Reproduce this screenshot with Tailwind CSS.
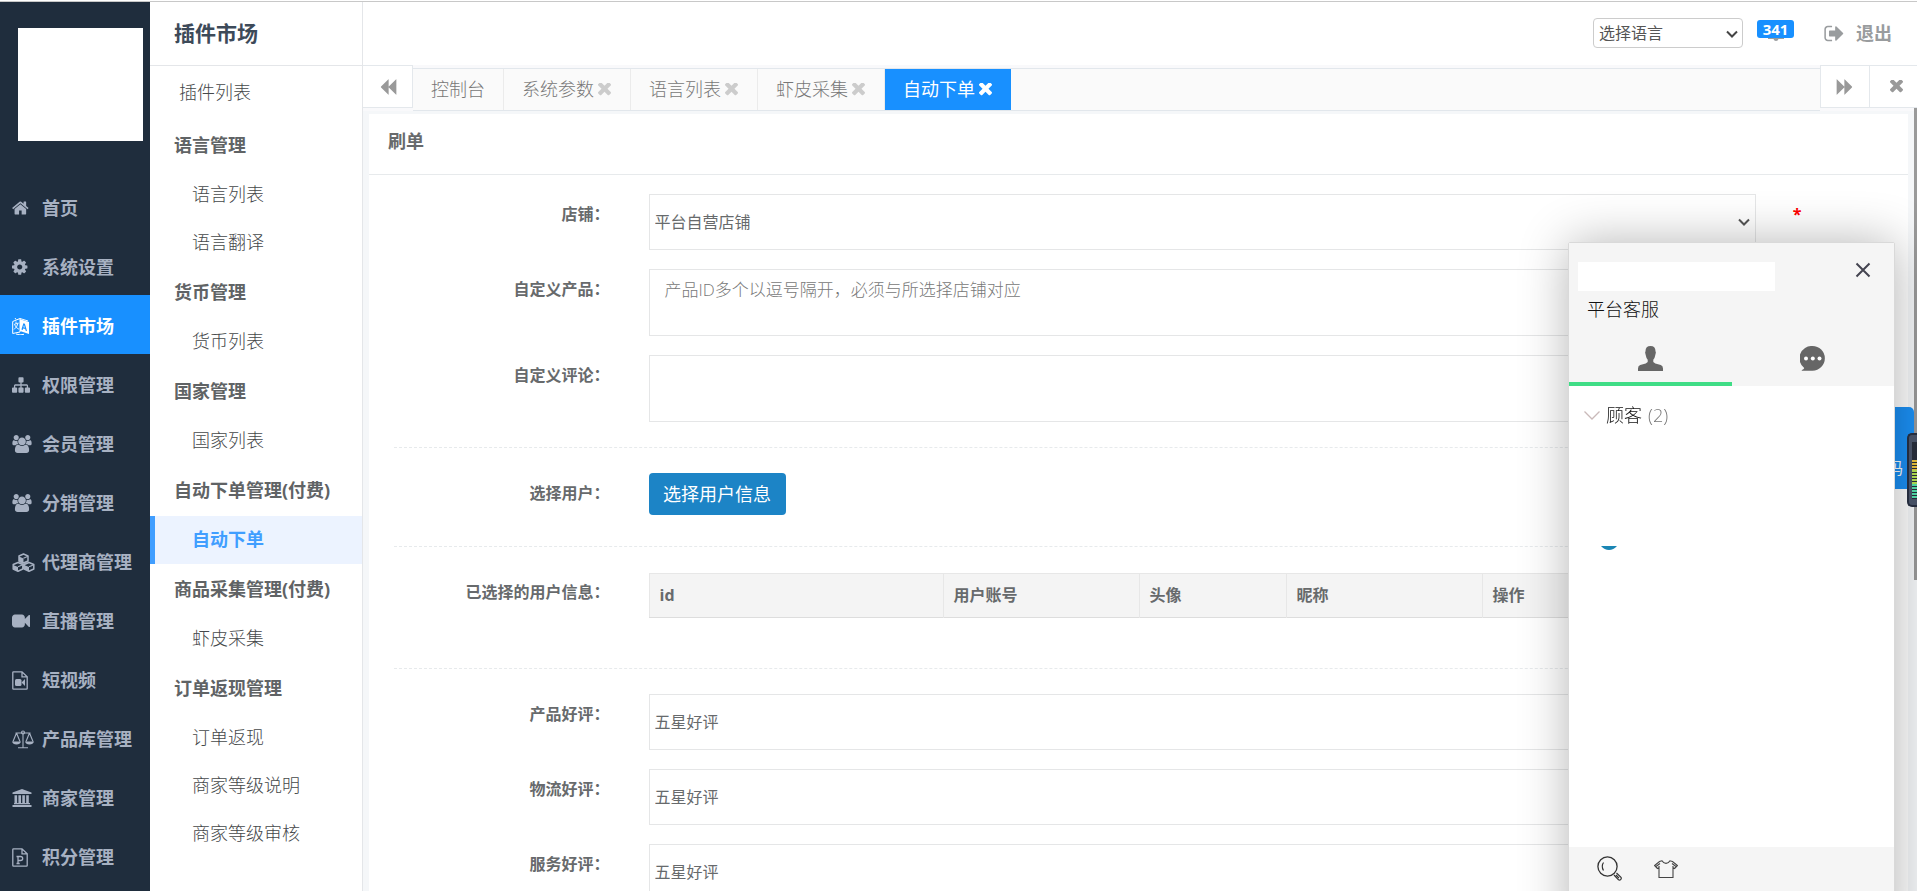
<!DOCTYPE html>
<html lang="zh-CN">
<head>
<meta charset="utf-8">
<title>插件市场 - 自动下单</title>
<script src="https://cdn.jsdelivr.net/npm/@tailwindcss/browser@4"></script>
</head>
<body class="h-screen overflow-hidden bg-white font-['Open_Sans','Noto_Sans_CJK_SC',sans-serif] text-[#676a6c]">
<svg class="hidden" aria-hidden="true">
  <symbol id="home" viewBox="64 0 1792 1792"><path d="M1472 992v480q0 26-19 45t-45 19h-384v-384h-256v384h-384q-26 0-45-19t-19-45v-480q0-1 .5-3t.5-3l575-474 575 474q1 2 1 6zm223-69l-62 74q-8 9-21 11h-3q-13 0-21-7l-692-577-692 577q-12 8-24 7-13-2-21-11l-62-74q-8-10-7-23.500t11-21.500l719-599q32-26 76-26t76 26l244 204v-195q0-14 9-23t23-9h192q14 0 23 9t9 23v408l219 182q10 8 11 21.500t-7 23.500z"/></symbol>
  <symbol id="cog" viewBox="128 0 1792 1792"><path d="M1152 896q0-106-75-181t-181-75-181 75-75 181 75 181 181 75 181-75 75-181zm512-109v222q0 12-8 23t-20 13l-185 28q-19 54-39 91 35 50 107 138 10 12 10 25t-9 23q-27 37-99 108t-94 71q-12 0-26-9l-138-108q-44 23-91 38-16 136-29 186-7 28-36 28h-222q-14 0-24.500-8.500t-11.500-21.500l-28-184q-49-16-90-37l-141 107q-10 9-25 9-14 0-25-11-126-114-165-168-7-10-7-23 0-12 8-23 15-21 51-66.500t54-70.500q-27-50-41-99l-183-27q-13-2-21-12.500t-8-23.500v-222q0-12 8-23t19-13l186-28q14-46 39-92-40-57-107-138-10-12-10-24 0-10 9-23 26-36 98.500-107.500t94.500-71.500q13 0 26 10l138 107q44-23 91-38 16-136 29-186 7-28 36-28h222q14 0 24.500 8.500t11.500 21.500l28 184q49 16 90 37l142-107q9-9 24-9 13 0 25 10 129 119 165 170 7 8 7 22 0 12-8 23-15 21-51 66.500t-54 70.500q26 50 41 98l183 28q13 2 21 12.500t8 23.500z"/></symbol>
  <symbol id="lang" viewBox="0 0 18 18"><path d="M.700 4.500l7.300-3v13.500L.7 16.500zM4 2.500l-1-1.500M8 1.500l8 2.500" fill="none" stroke="currentColor"/><path d="M2 7.500l4.500-1.500M4 4.500v2.300M6 6.300q-1 4-4 6.200M2.800 8q1.200 3 4.200 4.300" fill="none" stroke="currentColor" stroke-width=".9"/><path fill-rule="evenodd" d="M8 2.300L17 5v12L8 14zM11.400 6.200l-2 6.300 1.300.4.500-1.500 2 .600.500 1.800 1.400.400-2.200-7.500zM12 8l.8 2.700-1.400-.4z"/><path d="M4 17q4 1.600 8 .3" fill="none" stroke="currentColor"/></symbol>
  <symbol id="sitemap" viewBox="0 0 1792 1792"><path d="M1792 1248v320q0 40-28 68t-68 28h-320q-40 0-68-28t-28-68v-320q0-40 28-68t68-28h96v-192h-512v192h96q40 0 68 28t28 68v320q0 40-28 68t-68 28h-320q-40 0-68-28t-28-68v-320q0-40 28-68t68-28h96v-192h-512v192h96q40 0 68 28t28 68v320q0 40-28 68t-68 28h-320q-40 0-68-28t-28-68v-320q0-40 28-68t68-28h96v-192q0-52 38-90t90-38h512v-192h-96q-40 0-68-28t-28-68v-320q0-40 28-68t68-28h320q40 0 68 28t28 68v320q0 40-28 68t-68 28h-96v192h512q52 0 90 38t38 90v192h96q40 0 68 28t28 68z"/></symbol>
  <symbol id="users" viewBox="64 0 1920 1792"><path d="M657 896q-162 5-265 128h-134q-82 0-138-40.500t-56-118.500q0-353 124-353 6 0 43.500 21t97.500 42.500 119 21.500q67 0 133-23-5 37-5 66 0 139 81 256zm1071 637q0 120-73 189.500t-194 69.500h-874q-121 0-194-69.500t-73-189.500q0-53 3.500-103.500t14-109 26.500-108.500 43-97.500 62-81 85.500-53.500 111.500-20q10 0 43 21.500t73 48 107 48 135 21.500 135-21.500 107-48 73-48 43-21.500q61 0 111.500 20t85.500 53.500 62 81 43 97.500 26.500 108.500 14 109 3.500 103.500zm-1024-1277q0 106-75 181t-181 75-181-75-75-181 75-181 181-75 181 75 75 181zm704 384q0 159-112.500 271.500t-271.500 112.500-271.500-112.500-112.500-271.500 112.500-271.500 271.500-112.500 271.500 112.500 112.500 271.500zm576 225q0 78-56 118.500t-138 40.500h-134q-103-123-265-128 81-117 81-256 0-29-5-66 66 23 133 23 59 0 119-21.500t97.500-42.500 43.500-21q124 0 124 353zm-128-609q0 106-75 181t-181 75-181-75-75-181 75-181 181-75 181 75 75 181z"/></symbol>
  <symbol id="cubes" viewBox="0 0 23 19"><g fill="none" stroke="currentColor" stroke-width="1.500" stroke-linejoin="round"><path d="M7 3l4.500-2L16 3v5l-4.500 2L7 8zM1.200 11.500l4.800-2 4.800 2v4.500L6 18.200 1.200 16zM12.200 11.500l4.800-2 4.800 2v4.500L17 18.200 12.200 16z"/></g><path d="M7 3.600L11.500 5.600V10L7 8zM1.200 12L6 14v4.200L1.200 16zM12.200 12l4.800 2v4.200L12.200 16z"/><path d="M11.500 5.200L16 3.200M6 13.700l4.800-2M17 13.700l4.800-2" stroke="currentColor" stroke-width="1.200"/></symbol>
  <symbol id="video" viewBox="0 0 1792 1792"><path d="M1792 352v1088q0 42-39 59-13 5-25 5-27 0-45-19l-403-403v166q0 119-84.500 203.500t-203.500 84.500h-704q-119 0-203.500-84.500t-84.500-203.500v-704q0-119 84.500-203.500t203.500-84.500h704q119 0 203.500 84.500t84.500 203.500v165l403-402q18-19 45-19 12 0 25 5 39 17 39 59z"/></symbol>
  <symbol id="filevideo" viewBox="0 0 17 19"><path d="M.8 1.500q0-.7.700-.7h8.500l5.200 5v11.700q0 .7-.7.700h-13q-.7 0-.7-.700zM10 .8v5h5.200" fill="none" stroke="currentColor" stroke-width="1.300"/><rect x="3" y="8" width="6.500" height="7" rx="1.500"/><path d="M9.500 11.500L13 8v7z"/></symbol>
  <symbol id="filep" viewBox="0 0 17 19"><path d="M.8 1.500q0-.7.700-.7h8.500l5.200 5v11.700q0 .7-.7.700h-13q-.7 0-.7-.700zM10 .8v5h5.200" fill="none" stroke="currentColor" stroke-width="1.300"/><path d="M4.500 8.500h4q2.200 0 2.200 2t-2.200 2H6M6 8.500v7M4.500 15.500h3.200" fill="none" stroke="currentColor" stroke-width="1.300"/></symbol>
  <symbol id="scale" viewBox="0 0 22 19"><g fill="none" stroke="currentColor" stroke-width="1.100"><path d="M3.500 3h15M11 3v14.500M6 17.800h10M4.500 3L1 11.500M4.500 3L8 11.500M17.500 3L14 11.500M17.500 3L21 11.500"/><circle cx="11" cy="2.500" r="1.500"/></g><path d="M0 11.500h9q-.8 3-4.500 3t-4.500-3zM13 11.500h9q-.8 3-4.500 3t-4.500-3z"/></symbol>
  <symbol id="bank" viewBox="0 0 20 18"><path d="M10 0l9.500 3.500V5h-19V3.500zM2.500 6.200h2.600V14h1.300V6.200H9V14h1.300V6.200h2.600V14h1.300V6.200h2.600V14H18v1.300H2V14h.5zM.5 16h19v2H.5z"/></symbol>
  <symbol id="back" viewBox="0 0 1792 1792"><path d="M1683 141q19-19 32-13t13 32v1472q0 26-13 32t-32-13l-710-710q-8-9-13-19v710q0 26-13 32t-32-13l-710-710q-19-19-19-45t19-45l710-710q19-19 32-13t13 32v710q5-11 13-19z"/></symbol>
  <symbol id="times" viewBox="302 302 1188 1188"><path transform="translate(0 -132)" d="M1490 1322q0 40-28 68l-136 136q-28 28-68 28t-68-28l-294-294-294 294q-28 28-68 28t-68-28l-136-136q-28-28-28-68t28-68l294-294-294-294q-28-28-28-68t28-68l136-136q28-28 68-28t68 28l294 294 294-294q28-28 68-28t68 28l136 136q28 28 28 68t-28 68l-294 294 294 294q28 28 28 68z"/></symbol>
  <symbol id="signout" viewBox="64 192 1600 1408"><path d="M704 1440q0 4 1 20t.500 26.500-3 23.500-10 19.500-20.500 6.500h-320q-119 0-203.500-84.500t-84.500-203.500v-704q0-119 84.500-203.500t203.500-84.500h320q13 0 22.500 9.500t9.500 22.500q0 4 1 20t.500 26.500-3 23.500-10 19.500-20.500 6.500h-320q-66 0-113 47t-47 113v704q0 66 47 113t113 47h312l11.500 1 11.500 3 8 5.500 7 9 2 13.500zm928-544q0 26-19 45l-544 544q-19 19-45 19t-45-19-19-45v-288h-448q-26 0-45-19t-19-45v-384q0-26 19-45t45-19h448v-288q0-26 19-45t45-19 45 19l544 544q19 19 19 45z"/></symbol>
  <symbol id="down" viewBox="0 0 12 8"><path d="M1 1.500l5 5 5-5" fill="none" stroke="currentColor" stroke-width="2"/></symbol>
</svg>

<div class="flex h-full flex-col">
  <div class="h-[2px] shrink-0 border-b border-[#c8c8c8]"></div>
  <div class="flex min-h-0 flex-1">

    <!-- primary navigation -->
    <nav class="flex w-[150px] shrink-0 flex-col overflow-hidden bg-[#1f2d3d] text-[18px] font-bold text-[#a7b1c2] [&>a]:pt-[3px]">
      <div class="h-[175px] shrink-0 pt-[26px] pl-[18px]"><div class="h-[113px] w-[125px] bg-white"></div></div>
      <a href="#" class="flex h-[59px] shrink-0 items-center pl-3 whitespace-nowrap"><span class="w-[30px] shrink-0"><svg class="size-[18px] fill-current"><use href="#home"/></svg></span>首页</a>
      <a href="#" class="flex h-[59px] shrink-0 items-center pl-3 whitespace-nowrap"><span class="w-[30px] shrink-0"><svg class="size-[18px] fill-current"><use href="#cog"/></svg></span>系统设置</a>
      <a href="#" class="flex h-[59px] shrink-0 items-center bg-[#1890ff] pl-3 whitespace-nowrap text-white"><span class="w-[30px] shrink-0"><svg class="size-[18px] fill-current"><use href="#lang"/></svg></span>插件市场</a>
      <a href="#" class="flex h-[59px] shrink-0 items-center pl-3 whitespace-nowrap"><span class="w-[30px] shrink-0"><svg class="size-[18px] fill-current"><use href="#sitemap"/></svg></span>权限管理</a>
      <a href="#" class="flex h-[59px] shrink-0 items-center pl-3 whitespace-nowrap"><span class="w-[30px] shrink-0"><svg class="h-[18px] w-5 fill-current"><use href="#users"/></svg></span>会员管理</a>
      <a href="#" class="flex h-[59px] shrink-0 items-center pl-3 whitespace-nowrap"><span class="w-[30px] shrink-0"><svg class="h-[18px] w-5 fill-current"><use href="#users"/></svg></span>分销管理</a>
      <a href="#" class="flex h-[59px] shrink-0 items-center pl-3 whitespace-nowrap"><span class="w-[30px] shrink-0"><svg class="h-[19px] w-[23px] fill-current"><use href="#cubes"/></svg></span>代理商管理</a>
      <a href="#" class="flex h-[59px] shrink-0 items-center pl-3 whitespace-nowrap"><span class="w-[30px] shrink-0"><svg class="size-[18px] fill-current"><use href="#video"/></svg></span>直播管理</a>
      <a href="#" class="flex h-[59px] shrink-0 items-center pl-3 whitespace-nowrap"><span class="w-[30px] shrink-0"><svg class="h-[19px] w-[17px] fill-current"><use href="#filevideo"/></svg></span>短视频</a>
      <a href="#" class="flex h-[59px] shrink-0 items-center pl-3 whitespace-nowrap"><span class="w-[30px] shrink-0"><svg class="h-[19px] w-[22px] fill-current"><use href="#scale"/></svg></span>产品库管理</a>
      <a href="#" class="flex h-[59px] shrink-0 items-center pl-3 whitespace-nowrap"><span class="w-[30px] shrink-0"><svg class="h-[18px] w-5 fill-current"><use href="#bank"/></svg></span>商家管理</a>
      <a href="#" class="flex h-[59px] shrink-0 items-center pl-3 whitespace-nowrap"><span class="w-[30px] shrink-0"><svg class="h-[19px] w-[17px] fill-current"><use href="#filep"/></svg></span>积分管理</a>
    </nav>

    <!-- secondary navigation -->
    <nav class="flex w-[213px] shrink-0 flex-col overflow-hidden border-r border-[#e4e6e9] text-[18px] leading-6 font-light text-[#45484a] [&>*]:pb-[2px]">
      <h2 class="flex h-16 shrink-0 items-center border-b border-[#e4e6e9] pl-6 text-[21px] font-bold text-[#3d4a59]">插件市场</h2>
      <a href="#" class="flex h-[54px] shrink-0 items-center pl-[29px]">插件列表</a>
      <h3 class="flex h-[51px] shrink-0 items-center pl-6 font-bold text-[#606365]">语言管理</h3>
      <a href="#" class="flex h-12 shrink-0 items-center pl-[42px]">语言列表</a>
      <a href="#" class="flex h-12 shrink-0 items-center pl-[42px]">语言翻译</a>
      <h3 class="flex h-[51px] shrink-0 items-center pl-6 font-bold text-[#606365]">货币管理</h3>
      <a href="#" class="flex h-12 shrink-0 items-center pl-[42px]">货币列表</a>
      <h3 class="flex h-[51px] shrink-0 items-center pl-6 font-bold text-[#606365]">国家管理</h3>
      <a href="#" class="flex h-12 shrink-0 items-center pl-[42px]">国家列表</a>
      <h3 class="flex h-[51px] shrink-0 items-center pl-6 font-bold text-[#606365]">自动下单管理(付费)</h3>
      <a href="#" class="flex h-12 shrink-0 items-center border-l-5 border-[#409eff] bg-[#ecf3ff] pl-[37px] font-bold text-[#409eff]">自动下单</a>
      <h3 class="flex h-[51px] shrink-0 items-center pl-6 font-bold text-[#606365]">商品采集管理(付费)</h3>
      <a href="#" class="flex h-12 shrink-0 items-center pl-[42px]">虾皮采集</a>
      <h3 class="flex h-[51px] shrink-0 items-center pl-6 font-bold text-[#606365]">订单返现管理</h3>
      <a href="#" class="flex h-12 shrink-0 items-center pl-[42px]">订单返现</a>
      <a href="#" class="flex h-12 shrink-0 items-center pl-[42px]">商家等级说明</a>
      <a href="#" class="flex h-12 shrink-0 items-center pl-[42px]">商家等级审核</a>
    </nav>

    <div class="flex min-w-0 flex-1 flex-col">
      <header class="flex h-[63px] shrink-0 items-start justify-end pt-4 pr-[25px]">
        <div class="relative">
          <select aria-label="选择语言" class="block h-[30px] w-[150px] appearance-none rounded border border-[#ccc] pl-[5px] text-[16px] leading-6 text-[#555]"><option>选择语言</option></select>
          <svg class="pointer-events-none absolute top-3 right-[5px] h-2 w-3 text-[#444]"><use href="#down"/></svg>
        </div>
        <div class="ml-[14px] flex w-[37px] flex-col items-center pt-[2px]">
          <span class="z-10 flex h-[18px] w-full items-center justify-center rounded-[3px] bg-[#1890ff] text-[15px] font-bold text-white">341</span>
          <svg class="h-[3px] w-4 fill-[#999c9e]" viewBox="0 0 16 3"><path d="M0 0h16v1h-5.500q-.5 2-2.500 2t-2.500-2H0z"/></svg>
        </div>
        <a href="#" class="ml-[30px] flex h-[30px] items-center gap-3 text-[18px] font-bold text-[#999c9e]"><svg class="h-[17px] w-5 fill-current"><use href="#signout"/></svg>退出</a>
      </header>

      <!-- page tabs -->
      <div class="flex h-[46px] shrink-0 items-start bg-[#f9f9fb] text-[#999]">
        <button aria-label="向左滚动" class="flex h-[43px] w-[50px] shrink-0 items-center justify-center border-y border-r border-[#e4e8ec] bg-white"><svg class="size-[18px] fill-[#999]"><use href="#back"/></svg></button>
        <div class="mt-[3px] flex h-[43px] min-w-0 flex-1 border-y border-[#e2e7ec] bg-[#fafafa] text-[18px] font-light text-[#777]">
          <a href="#" class="flex items-center border-r border-[#ebebeb] px-[18px]">控制台</a>
          <a href="#" class="flex items-center gap-1 border-r border-[#ebebeb] pr-[19px] pl-[18px]">系统参数<svg class="size-[13px] fill-[#ccc]"><use href="#times"/></svg></a>
          <a href="#" class="flex items-center gap-1 border-r border-[#ebebeb] pr-[19px] pl-[18px]">语言列表<svg class="size-[13px] fill-[#ccc]"><use href="#times"/></svg></a>
          <a href="#" class="flex items-center gap-1 border-r border-[#ebebeb] pr-[19px] pl-[18px]">虾皮采集<svg class="size-[13px] fill-[#ccc]"><use href="#times"/></svg></a>
          <a href="#" class="flex items-center gap-1 bg-[#1890ff] pr-[19px] pl-[18px] font-normal text-white">自动下单<svg class="size-[13px] fill-white"><use href="#times"/></svg></a>
        </div>
        <button aria-label="向右滚动" class="flex h-[43px] w-[50px] shrink-0 items-center justify-center border border-[#e4e8ec] bg-white"><svg class="size-[18px] rotate-180 fill-[#999]"><use href="#back"/></svg></button>
        <button aria-label="关闭" class="flex h-[43px] w-[47px] shrink-0 items-center justify-center border-y border-[#e4e8ec] bg-white pl-[6px]"><svg class="size-[13px] fill-[#999]"><use href="#times"/></svg></button>
      </div>

      <!-- page content -->
      <main class="relative min-h-0 flex-1 overflow-hidden bg-[#f5f7f9] pt-[3px] pr-[9px] pl-[6px]">
        <section class="bg-white">
          <h1 class="flex h-[61px] items-center border-b border-[#e7eaec] px-[19px] pb-[6px] text-[18px] font-bold">刷单</h1>
          <form class="px-[25px] pt-[19px] text-[16px] leading-6">
            <div class="-mx-[19px] mb-[19px] grid grid-cols-12">
              <label for="shop" class="col-span-2 pt-2 pr-5 text-right font-bold">店铺：</label>
              <div class="relative col-span-9 px-[19px]">
                <select id="shop" class="block h-14 w-full appearance-none border border-[#e5e6e7] bg-white px-[5px]"><option>平台自营店铺</option></select>
                <svg class="pointer-events-none absolute top-6 right-[25px] h-2 w-3 text-[#555]"><use href="#down"/></svg>
              </div>
              <span class="pt-2 pl-[18px] font-bold text-[#f00]">*</span>
            </div>
            <div class="-mx-[19px] mb-[19px] grid grid-cols-12">
              <label for="goods" class="col-span-2 pt-2 pr-5 text-right font-bold">自定义产品：</label>
              <div class="col-span-9 px-[19px]"><textarea id="goods" placeholder="产品ID多个以逗号隔开，必须与所选择店铺对应" class="block h-[67px] w-full resize-none border border-[#e5e6e7] px-[15px] py-2 text-[17px] font-light placeholder:text-[#777]"></textarea></div>
            </div>
            <div class="-mx-[19px] grid grid-cols-12">
              <label for="comment" class="col-span-2 pt-2 pr-5 text-right font-bold">自定义评论：</label>
              <div class="col-span-9 px-[19px]"><textarea id="comment" class="block h-[67px] w-full resize-none border border-[#e5e6e7] px-[15px] py-2 text-[17px]"></textarea></div>
            </div>
            <hr class="my-[25px] border-dashed border-[#e7eaec]">
            <div class="-mx-[19px] grid grid-cols-12">
              <label for="pick" class="col-span-2 pt-2 pr-5 text-right font-bold">选择用户：</label>
              <div class="col-span-9 px-[19px]"><button id="pick" type="button" class="block h-[42px] w-[137px] rounded-[4px] bg-[#1c84c6] text-[18px] text-white">选择用户信息</button></div>
            </div>
            <hr class="mt-[31px] mb-[26px] border-dashed border-[#e7eaec]">
            <div class="-mx-[19px] grid grid-cols-12">
              <span class="col-span-2 pt-[7px] pr-5 text-right font-bold">已选择的用户信息：</span>
              <div class="col-span-9 px-[19px]">
                <table class="w-full table-fixed border-collapse text-left">
                  <thead class="bg-[#f4f4f4]">
                    <tr class="h-11 border border-x-[#e7e7e7] border-t-[#e7e7e7] border-b-[#ddd]">
                      <th class="w-[294px] border-r border-r-[#e7e7e7] pb-[2px] pl-[10px]">id</th>
                      <th class="w-[196px] border-r border-r-[#e7e7e7] pb-[2px] pl-[10px]">用户账号</th>
                      <th class="w-[147px] border-r border-r-[#e7e7e7] pb-[2px] pl-[10px]">头像</th>
                      <th class="w-[196px] border-r border-r-[#e7e7e7] pb-[2px] pl-[10px]">昵称</th>
                      <th class="pb-[2px] pl-[10px]">操作</th>
                    </tr>
                  </thead>
                </table>
              </div>
            </div>
            <hr class="mt-[50px] mb-[25px] border-dashed border-[#e7eaec]">
            <div class="-mx-[19px] mb-[19px] grid grid-cols-12">
              <label for="r1" class="col-span-2 pt-2 pr-5 text-right font-bold">产品好评：</label>
              <div class="col-span-9 px-[19px]"><select id="r1" class="block h-14 w-full appearance-none border border-[#e5e6e7] bg-white px-[5px]"><option>五星好评</option></select></div>
            </div>
            <div class="-mx-[19px] mb-[19px] grid grid-cols-12">
              <label for="r2" class="col-span-2 pt-2 pr-5 text-right font-bold">物流好评：</label>
              <div class="col-span-9 px-[19px]"><select id="r2" class="block h-14 w-full appearance-none border border-[#e5e6e7] bg-white px-[5px]"><option>五星好评</option></select></div>
            </div>
            <div class="-mx-[19px] mb-[19px] grid grid-cols-12">
              <label for="r3" class="col-span-2 pt-2 pr-5 text-right font-bold">服务好评：</label>
              <div class="col-span-9 px-[19px]"><select id="r3" class="block h-14 w-full appearance-none border border-[#e5e6e7] bg-white px-[5px]"><option>五星好评</option></select></div>
            </div>
          </form>
        </section>
      </main>
    </div>
  </div>
</div>

<!-- scrollbar thumb -->
<div class="fixed top-[108px] right-0 h-[472px] w-[3px] bg-[#9a9a9a]"></div>

<!-- side button, partly covered by the chat window -->
<button class="fixed top-[407px] right-[3px] flex h-[82px] w-10 items-end rounded-tr-[5px] bg-[#1b90f5] pb-[9px] pl-[13px] text-[16px] leading-6 text-white">码</button>

<!-- chat window -->
<aside class="fixed top-[242px] right-[22px] flex h-[700px] w-[327px] flex-col rounded-[2px] border border-[#d9d9d9] bg-white text-[18px] text-[#111] shadow-[1px_1px_50px_rgba(0,0,0,0.3)]">
  <div class="h-[143px] shrink-0 bg-[#f5f5f5]">
    <div class="flex items-start justify-between pt-[19px] pr-[23px] pl-[9px]">
      <div class="h-[29px] w-[197px] bg-white"></div>
      <button aria-label="关闭聊天"><svg class="size-4" viewBox="0 0 16 16"><path d="M1.500 1.500l13 13M14.500 1.500l-13 13" stroke="#444450" stroke-width="2"/></svg></button>
    </div>
    <p class="mt-[6px] pl-[18px] leading-6 font-light">平台客服</p>
    <div class="mt-[10px] grid h-[55px] grid-cols-2">
      <button aria-label="联系人" class="flex justify-center border-b-4 border-[#3fdd86] pt-[15px]"><svg class="h-[25px] w-[25px] fill-[#666]" viewBox="0 0 25 25"><path d="M12.500 0c3.300 0 5 1.800 5 5.200l.4 1.300-.6 2.600q-.5 3.200-2 4.600v2.300l2 1.400 5.500 1.700Q25 20 25 22.500V25H0v-2.500q0-2.500 2.200-3.400l5.500-1.700 2-1.400v-2.300q-1.500-1.400-2-4.600l-.6-2.600.4-1.300C7.500 1.800 9.200 0 12.500 0z"/></svg></button>
      <button aria-label="消息" class="flex justify-center pt-[15px]"><svg class="h-[25px] w-[25px]" viewBox="0 0 25 25"><path fill="#666" d="M12.500 0a12.300 12.300 0 0 1 0 24.700H2q-.8-.7.500-1 1.500-.4 1.700-1.700A12.300 12.300 0 0 1 12.500 0z"/><g fill="#fff"><circle cx="6" cy="12.500" r="2"/><circle cx="12.800" cy="12.500" r="2"/><circle cx="19.500" cy="12.500" r="2"/></g></svg></button>
    </div>
  </div>
  <div class="h-[461px] shrink-0">
    <h4 class="flex h-[60px] items-center pb-[2px] pl-[15px] font-light"><svg class="mr-[6px] h-[9px] w-4" viewBox="0 0 16 9"><path d="M.500.500L8 8l7.500-7.500" fill="none" stroke="#c9b9b9" stroke-width="1.300"/></svg>顾客<span class="ml-[6px] text-[#777]">(2)</span></h4>
    <svg class="mt-[100px] ml-8 h-1 w-4" viewBox="0 0 16 4"><path d="M0 0h16q-3.500 4-8 4T0 0z" fill="#1a86b4"/></svg>
  </div>
  <div class="flex flex-1 items-start gap-8 bg-[#f5f5f5] pt-[9px] pl-7">
    <button aria-label="搜索"><svg class="block size-[25px]" viewBox="0 0 25 25" fill="none" stroke="#333"><circle cx="10.500" cy="10.500" r="9.600" stroke-width="1.300"/><path d="M6.500 6.500q-2.500 3.500 0 8" stroke-width="1.200"/><path d="M17 19l4.500 4.800q1.200.8 2.200-.2t.3-2.200L19.500 17M19 19l3 3.200" stroke-width="1.200"/></svg></button>
    <button aria-label="换肤" class="pt-1"><svg class="block h-[18px] w-6" viewBox="0 0 24 18" fill="none" stroke="#444" stroke-width="1.100"><path d="M8 .8L5.500 1.500.6 5.500l2.800 3L5 7.500v10h14v-10l1.600 1 2.800-3-4.900-4L16 .8q-1.500 2.600-4 2.600T8 .8zM5 7.500V6M19 7.500V6M2 6.500l4-3M22 6.500l-4-3"/></svg></button>
  </div>
</aside>

<!-- level meter docked at the window edge -->
<div class="fixed top-[433px] right-0 flex h-[74px] w-[10px] justify-end rounded-l-[5px] border-2 border-r-0 border-[#252c3d] bg-[#465064] py-[7px]">
  <svg class="h-[57px] w-[5px]" viewBox="0 0 5 57" stroke-dasharray="2 1"><rect width="5" height="57" fill="#252b38"/><g fill="none" stroke-width="5"><path d="M2.500 18v10" stroke="#d8b53c"/><path d="M2.500 28v14" stroke="#a9d24f"/><path d="M2.500 42v15" stroke="#4fd0a0"/></g></svg>
</div>
</body>
</html>
